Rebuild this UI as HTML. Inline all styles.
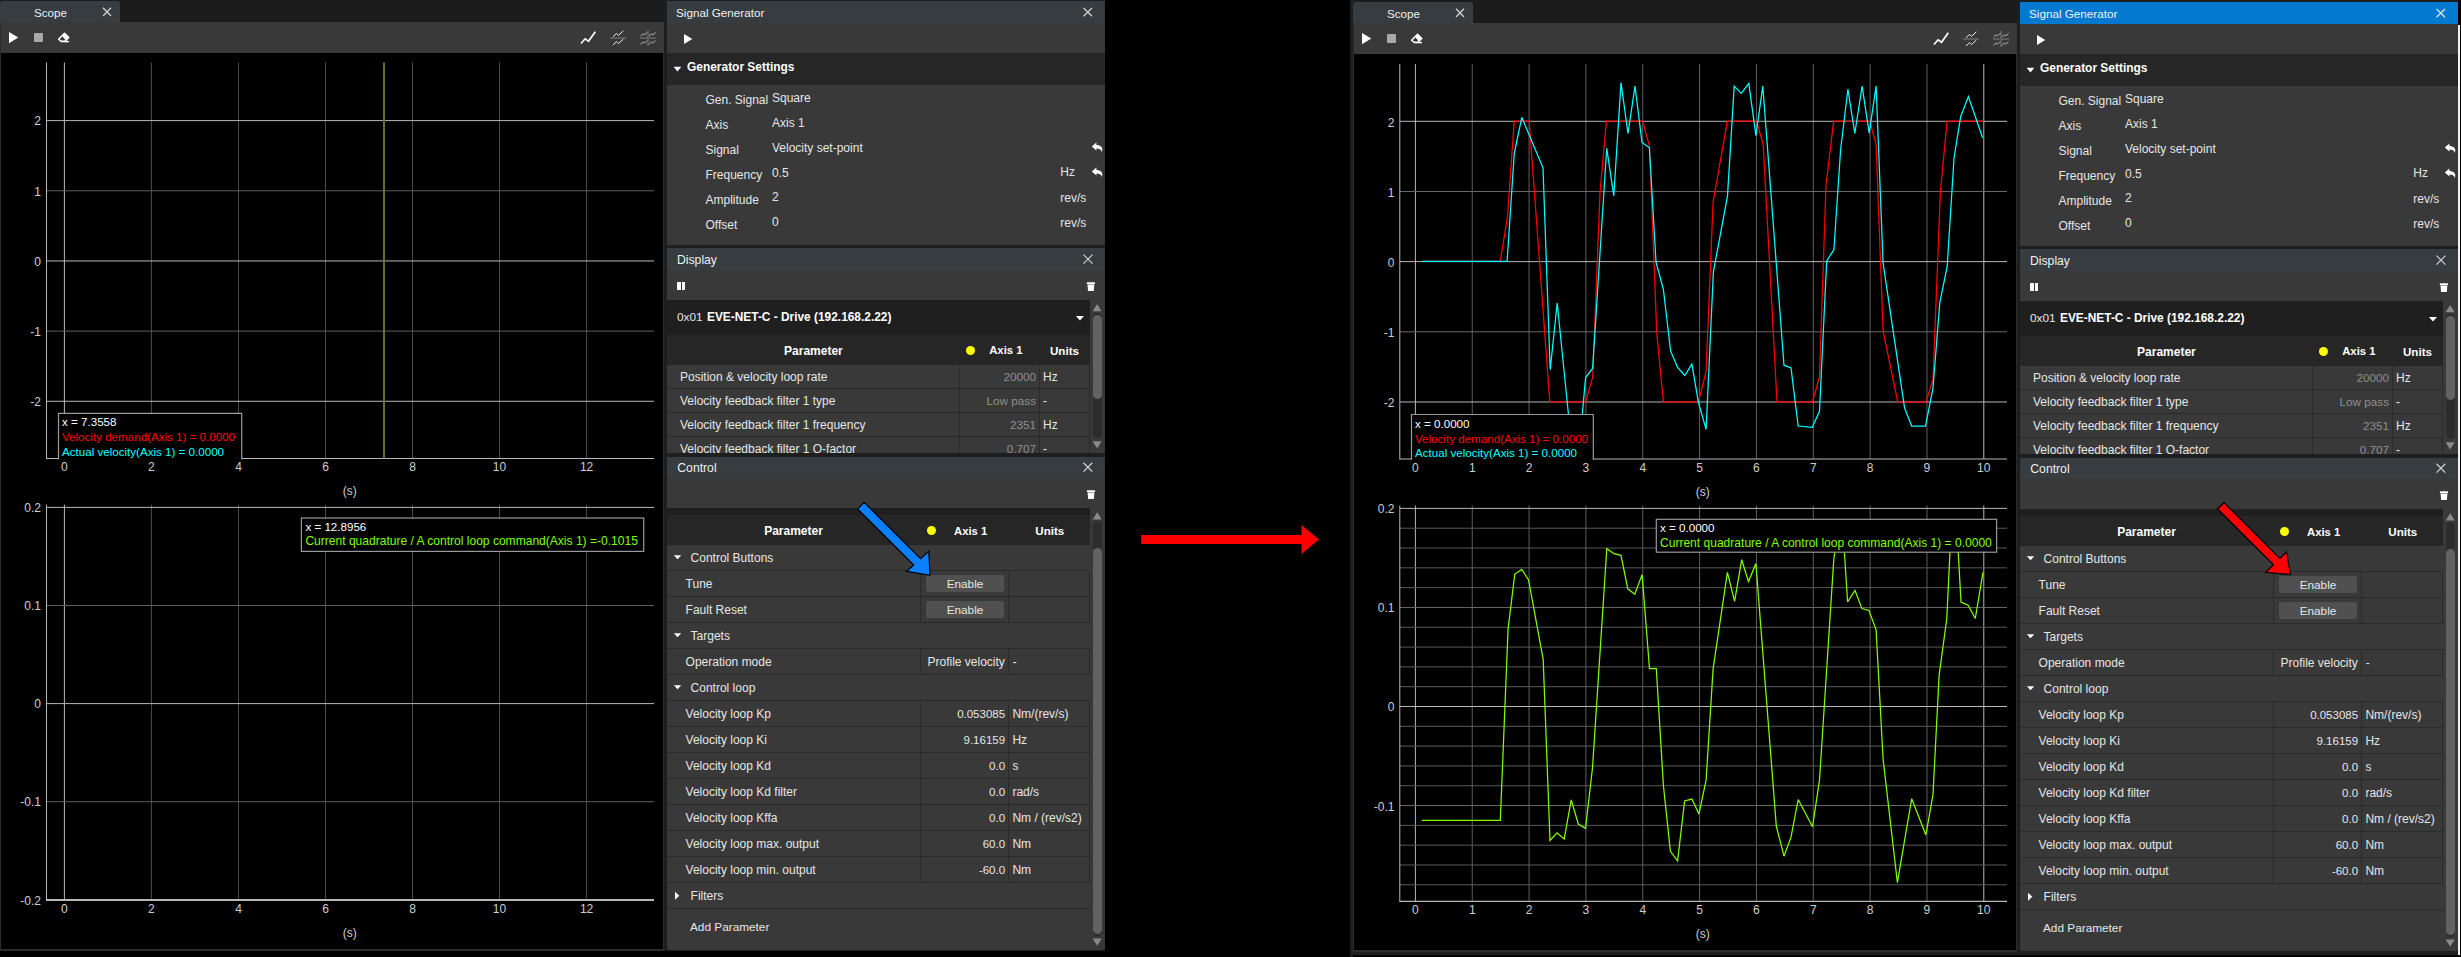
<!DOCTYPE html>
<html><head><meta charset="utf-8"><style>
html,body{margin:0;padding:0;background:#000;width:2461px;height:957px;overflow:hidden}
#root{position:relative;width:2461px;height:957px;font-family:"Liberation Sans", sans-serif;}
#root>div{position:absolute;white-space:nowrap}
svg{position:absolute;left:0;top:0}
</style></head><body><div id="root">
<div style="left:0.00px;top:0.00px;width:1105.00px;height:951.00px;background:#1e1e1e;"></div>
<div style="left:0.00px;top:0.00px;width:664.00px;height:22.00px;background:#1c1c1c;"></div>
<div style="left:0.00px;top:1.00px;width:120.00px;height:21.00px;background:#363c40;border-radius:3px 3px 0 0;"></div>
<div style="left:34.00px;top:7.48px;font-size:11.6px;line-height:11.6px;color:#f0f0f0;">Scope</div>
<svg width="2461" height="957" viewBox="0 0 2461 957" style="position:absolute;left:0;top:0"><path d="M103 7.8L111 16M111 7.8L103 16" stroke="#cfcfcf" stroke-width="1.3" fill="none"/></svg>
<div style="left:0.00px;top:22.00px;width:664.00px;height:929.00px;background:#2c2c2c;"></div>
<div style="left:1.00px;top:22.00px;width:663.00px;height:31.00px;background:#393939;"></div>
<div style="left:1.00px;top:53.00px;width:662.00px;height:896.00px;background:#000000;"></div>
<svg width="2461" height="957" viewBox="0 0 2461 957" style="position:absolute;left:0;top:0"><path d="M9 32L18.3 37.6L9 43.2Z" fill="#ffffff"/></svg>
<div style="left:34.00px;top:32.60px;width:9.00px;height:9.40px;background:#a9a9a9;border-radius:1px;"></div>
<svg width="2461" height="957" viewBox="0 0 2461 957" style="position:absolute;left:0;top:0"><path d="M58.6 39.2L64.5 33.2L68.8 37.5L65 41.3H61Z" fill="none" stroke="#fff" stroke-width="1.5" stroke-linejoin="round"/><path d="M62 35.8L64.5 33.2L68.8 37.5L65.8 40.5Z" fill="#fff"/><path d="M61 41.6H69" stroke="#fff" stroke-width="1.4"/><path d="M581 43.5L585.1 38.8L588.5 41.2L595.3 31.8" fill="none" stroke="#fff" stroke-width="1.7"/></svg>
<div style="left:610.20px;top:37.10px;width:15.60px;height:1.80px;background:#5c5c5c;"></div>
<svg width="2461" height="957" viewBox="0 0 2461 957" style="position:absolute;left:0;top:0"><path d="M613 36.7L616.5 33.5L618.5 35.4L623.3 30.8M613 44.9L616.5 41.7L618.5 43.6L623.3 39.1" fill="none" stroke="#eee" stroke-width="1"/></svg>
<div style="left:640.10px;top:37.20px;width:15.80px;height:1.70px;background:#5c5c5c;"></div>
<div style="left:647.40px;top:30.20px;width:1.50px;height:15.40px;background:#5c5c5c;"></div>
<svg width="2461" height="957" viewBox="0 0 2461 957" style="position:absolute;left:0;top:0"><path d="M640.5 36L643 33.8L644.5 35L647 32.3M649 36L651.5 33.8L653 35L655.5 32.3M640.5 44.3L643 42L644.5 43.2L647 40.5M649 44.3L651.5 42L653 43.2L655.5 40.5" fill="none" stroke="#bdbdbd" stroke-width="0.9"/></svg>
<div style="left:667.00px;top:1.00px;width:438.00px;height:22.00px;background:#363c40;"></div>
<div style="left:676.00px;top:7.40px;font-size:11.7px;line-height:11.7px;color:#f0f0f0;">Signal Generator</div>
<svg width="2461" height="957" viewBox="0 0 2461 957" style="position:absolute;left:0;top:0"><path d="M1083.5 8L1092 16.2M1092 8L1083.5 16.2" stroke="#cfcfcf" stroke-width="1.3" fill="none"/></svg>
<div style="left:667.00px;top:23.00px;width:438.00px;height:30.00px;background:#393939;"></div>
<svg width="2461" height="957" viewBox="0 0 2461 957" style="position:absolute;left:0;top:0"><path d="M684 34L692.3 39.0L684 44Z" fill="#ffffff"/></svg>
<div style="left:667.00px;top:53.00px;width:438.00px;height:32.00px;background:#262626;"></div>
<svg width="2461" height="957" viewBox="0 0 2461 957" style="position:absolute;left:0;top:0"><path d="M673.6 66.8L681.3 66.8L677.45 71.4Z" fill="#ffffff"/></svg>
<div style="left:687.00px;top:62.08px;font-size:11.95px;line-height:11.95px;color:#ffffff;font-weight:bold;">Generator Settings</div>
<div style="left:667.00px;top:85.00px;width:438.00px;height:159.50px;background:#393939;"></div>
<div style="left:705.50px;top:93.84px;font-size:12px;line-height:12px;color:#e6e6e6;">Gen. Signal</div>
<div style="left:772.00px;top:92.04px;font-size:12px;line-height:12px;color:#e6e6e6;">Square</div>
<div style="left:705.50px;top:118.78px;font-size:12px;line-height:12px;color:#e6e6e6;">Axis</div>
<div style="left:772.00px;top:116.90px;font-size:12px;line-height:12px;color:#e6e6e6;">Axis 1</div>
<div style="left:705.50px;top:143.72px;font-size:12px;line-height:12px;color:#e6e6e6;">Signal</div>
<div style="left:772.00px;top:141.76px;font-size:12px;line-height:12px;color:#e6e6e6;">Velocity set-point</div>
<div style="left:705.50px;top:168.66px;font-size:12px;line-height:12px;color:#e6e6e6;">Frequency</div>
<div style="left:772.00px;top:166.62px;font-size:12px;line-height:12px;color:#e6e6e6;">0.5</div>
<div style="left:705.50px;top:193.60px;font-size:12px;line-height:12px;color:#e6e6e6;">Amplitude</div>
<div style="left:772.00px;top:191.48px;font-size:12px;line-height:12px;color:#e6e6e6;">2</div>
<div style="left:705.50px;top:218.54px;font-size:12px;line-height:12px;color:#e6e6e6;">Offset</div>
<div style="left:772.00px;top:216.34px;font-size:12px;line-height:12px;color:#e6e6e6;">0</div>
<div style="left:1060.30px;top:166.34px;font-size:12px;line-height:12px;color:#e6e6e6;">Hz</div>
<div style="left:1060.30px;top:192.24px;font-size:12px;line-height:12px;color:#e6e6e6;">rev/s</div>
<div style="left:1060.30px;top:217.24px;font-size:12px;line-height:12px;color:#e6e6e6;">rev/s</div>
<svg width="2461" height="957" viewBox="0 0 2461 957" style="position:absolute;left:0;top:0"><path d="M1091.8 146.6L1096.3999999999999 142.6V144.9C1100.3 144.9 1103.6 147.2 1101.8 151.9C1101.1 149.6 1099.3 148.6 1096.3999999999999 148.6V150.6Z" fill="#ffffff"/><path d="M1091.8 171.6L1096.3999999999999 167.6V169.9C1100.3 169.9 1103.6 172.2 1101.8 176.9C1101.1 174.6 1099.3 173.6 1096.3999999999999 173.6V175.6Z" fill="#ffffff"/></svg>
<div style="left:667.00px;top:248.00px;width:438.00px;height:22.00px;background:#363c40;"></div>
<div style="left:677.00px;top:253.87px;font-size:12.2px;line-height:12.2px;color:#f0f0f0;">Display</div>
<svg width="2461" height="957" viewBox="0 0 2461 957" style="position:absolute;left:0;top:0"><path d="M1083.5 254.6L1092.5 263.6M1092.5 254.6L1083.5 263.6" stroke="#cfcfcf" stroke-width="1.3" fill="none"/></svg>
<div style="left:667.00px;top:270.00px;width:438.00px;height:182.60px;background:#393939;"></div>
<div style="left:677.20px;top:281.80px;width:3.40px;height:8.20px;background:#ffffff;"></div>
<div style="left:681.80px;top:281.80px;width:3.40px;height:8.20px;background:#ffffff;"></div>
<svg width="2461" height="957" viewBox="0 0 2461 957" style="position:absolute;left:0;top:0"><path d="M1086.8 282.3h8.2v1.8h-8.2Z" fill="#ffffff"/><path d="M1089.6 282.3q1.2-1.3 2.4 0Z" fill="#ffffff"/><path d="M1087.5 284.5h6.8l-0.5 6.5h-5.8Z" fill="#ffffff"/></svg>
<div style="left:667.00px;top:300.00px;width:423.00px;height:34.70px;background:#1f1f1f;"></div>
<div style="left:677.00px;top:312.31px;font-size:11.8px;line-height:11.8px;color:#e6e6e6;">0x01</div>
<div style="left:707.00px;top:312.23px;font-size:11.9px;line-height:11.9px;color:#ffffff;font-weight:bold;">EVE-NET-C - Drive (192.168.2.22)</div>
<svg width="2461" height="957" viewBox="0 0 2461 957" style="position:absolute;left:0;top:0"><path d="M1075.9 316L1084 316L1079.95 320.6Z" fill="#ffffff"/></svg>
<div style="left:667.00px;top:334.70px;width:423.00px;height:30.30px;background:#262626;"></div>
<div style="left:513.40px;width:600px;text-align:center;top:344.54px;font-size:12px;line-height:12px;color:#ffffff;font-weight:bold;">Parameter</div>
<div style="left:966.30px;top:345.80px;width:9px;height:9px;border-radius:50%;background:#ffff00"></div>
<div style="left:989.20px;top:345.33px;font-size:11.3px;line-height:11.3px;color:#ffffff;font-weight:bold;">Axis 1</div>
<div style="left:1050.00px;top:345.08px;font-size:11.6px;line-height:11.6px;color:#ffffff;font-weight:bold;">Units</div>
<div style="left:680.00px;top:370.94px;font-size:12px;line-height:12px;color:#e6e6e6;">Position &amp; velocity loop rate</div>
<div style="left:436.00px;width:600px;text-align:right;top:371.20px;font-size:11.7px;line-height:11.7px;color:#8f8f8f;">20000</div>
<div style="left:1043.00px;top:370.94px;font-size:12px;line-height:12px;color:#e6e6e6;">Hz</div>
<div style="left:680.00px;top:395.14px;font-size:12px;line-height:12px;color:#e6e6e6;">Velocity feedback filter 1 type</div>
<div style="left:436.00px;width:600px;text-align:right;top:395.40px;font-size:11.7px;line-height:11.7px;color:#8f8f8f;">Low pass</div>
<div style="left:1043.00px;top:395.14px;font-size:12px;line-height:12px;color:#e6e6e6;">-</div>
<div style="left:680.00px;top:419.04px;font-size:12px;line-height:12px;color:#e6e6e6;">Velocity feedback filter 1 frequency</div>
<div style="left:436.00px;width:600px;text-align:right;top:419.30px;font-size:11.7px;line-height:11.7px;color:#8f8f8f;">2351</div>
<div style="left:1043.00px;top:419.04px;font-size:12px;line-height:12px;color:#e6e6e6;">Hz</div>
<div style="left:680.00px;top:442.94px;font-size:12px;line-height:12px;color:#e6e6e6;">Velocity feedback filter 1 Q-factor</div>
<div style="left:436.00px;width:600px;text-align:right;top:443.20px;font-size:11.7px;line-height:11.7px;color:#8f8f8f;">0.707</div>
<div style="left:1043.00px;top:442.94px;font-size:12px;line-height:12px;color:#e6e6e6;">-</div>
<div style="left:667.00px;top:387.80px;width:423.00px;height:1.00px;background:#2b2b2b;"></div>
<div style="left:667.00px;top:411.90px;width:423.00px;height:1.00px;background:#2b2b2b;"></div>
<div style="left:667.00px;top:436.10px;width:423.00px;height:1.00px;background:#2b2b2b;"></div>
<div style="left:958.80px;top:365.00px;width:1.00px;height:87.60px;background:#2b2b2b;"></div>
<div style="left:1038.80px;top:365.00px;width:1.00px;height:87.60px;background:#2b2b2b;"></div>
<div style="left:1089.20px;top:365.00px;width:1.00px;height:87.60px;background:#2b2b2b;"></div>
<div style="left:667.00px;top:452.60px;width:438.00px;height:3.90px;background:#1e1e1e;"></div>
<svg width="2461" height="957" viewBox="0 0 2461 957" style="position:absolute;left:0;top:0"><path d="M1092.6 311.3L1101.6 311.3L1097.1 304Z" fill="#8a8a8a"/></svg>
<div style="left:1093.10px;top:312.50px;width:9.00px;height:125.50px;background:#2c2c2c;border-radius:4.5px;"></div>
<div style="left:1093.10px;top:314.70px;width:9.00px;height:83.90px;background:#626262;border-radius:4.5px;"></div>
<svg width="2461" height="957" viewBox="0 0 2461 957" style="position:absolute;left:0;top:0"><path d="M1092.6 441.2L1101.6 441.2L1097.1 448.5Z" fill="#8a8a8a"/></svg>
<div style="left:667.00px;top:456.50px;width:438.00px;height:20.90px;background:#363c40;"></div>
<div style="left:677.30px;top:461.87px;font-size:12.2px;line-height:12.2px;color:#f0f0f0;">Control</div>
<svg width="2461" height="957" viewBox="0 0 2461 957" style="position:absolute;left:0;top:0"><path d="M1083.5 462.7L1092.3 471.6M1092.3 462.7L1083.5 471.6" stroke="#cfcfcf" stroke-width="1.3" fill="none"/></svg>
<div style="left:667.00px;top:477.40px;width:438.00px;height:472.40px;background:#393939;border-radius:0 0 2px 2px;"></div>
<svg width="2461" height="957" viewBox="0 0 2461 957" style="position:absolute;left:0;top:0"><path d="M1086.9 490.3h8.2v1.8h-8.2Z" fill="#ffffff"/><path d="M1089.7 490.3q1.2-1.3 2.4 0Z" fill="#ffffff"/><path d="M1087.6000000000001 492.5h6.8l-0.5 6.5h-5.8Z" fill="#ffffff"/></svg>
<div style="left:667.00px;top:507.50px;width:423.00px;height:7.30px;background:#1f1f1f;"></div>
<div style="left:667.00px;top:514.80px;width:423.00px;height:30.40px;background:#262626;"></div>
<div style="left:493.50px;width:600px;text-align:center;top:524.84px;font-size:12px;line-height:12px;color:#ffffff;font-weight:bold;">Parameter</div>
<div style="left:927.30px;top:525.60px;width:9.2px;height:9.2px;border-radius:50%;background:#ffff00"></div>
<div style="left:954.00px;top:525.53px;font-size:11.3px;line-height:11.3px;color:#ffffff;font-weight:bold;">Axis 1</div>
<div style="left:1035.30px;top:525.28px;font-size:11.6px;line-height:11.6px;color:#ffffff;font-weight:bold;">Units</div>
<svg width="2461" height="957" viewBox="0 0 2461 957" style="position:absolute;left:0;top:0"><path d="M673.9 555.2L681.2 555.2L677.55 559.3Z" fill="#ffffff"/></svg>
<div style="left:690.60px;top:552.44px;font-size:12px;line-height:12px;color:#e6e6e6;">Control Buttons</div>
<div style="left:667.00px;top:570.00px;width:423.00px;height:1.00px;background:#2b2b2b;"></div>
<div style="left:685.60px;top:578.44px;font-size:12px;line-height:12px;color:#e6e6e6;">Tune</div>
<div style="left:919.90px;top:570.50px;width:1.00px;height:26.00px;background:#2b2b2b;"></div>
<div style="left:1007.90px;top:570.50px;width:1.00px;height:26.00px;background:#2b2b2b;"></div>
<div style="left:1089.20px;top:570.50px;width:1.00px;height:26.00px;background:#2b2b2b;"></div>
<div style="left:926.20px;top:574.80px;width:77.80px;height:17.00px;background:#505050;border-radius:2px;"></div>
<div style="left:665.00px;width:600px;text-align:center;top:578.61px;font-size:11.8px;line-height:11.8px;color:#e6e6e6;">Enable</div>
<div style="left:667.00px;top:596.00px;width:423.00px;height:1.00px;background:#2b2b2b;"></div>
<div style="left:685.60px;top:604.44px;font-size:12px;line-height:12px;color:#e6e6e6;">Fault Reset</div>
<div style="left:919.90px;top:596.50px;width:1.00px;height:26.00px;background:#2b2b2b;"></div>
<div style="left:1007.90px;top:596.50px;width:1.00px;height:26.00px;background:#2b2b2b;"></div>
<div style="left:1089.20px;top:596.50px;width:1.00px;height:26.00px;background:#2b2b2b;"></div>
<div style="left:926.20px;top:600.80px;width:77.80px;height:17.00px;background:#505050;border-radius:2px;"></div>
<div style="left:665.00px;width:600px;text-align:center;top:604.61px;font-size:11.8px;line-height:11.8px;color:#e6e6e6;">Enable</div>
<div style="left:667.00px;top:622.00px;width:423.00px;height:1.00px;background:#2b2b2b;"></div>
<svg width="2461" height="957" viewBox="0 0 2461 957" style="position:absolute;left:0;top:0"><path d="M673.9 633.2L681.2 633.2L677.55 637.3Z" fill="#ffffff"/></svg>
<div style="left:690.60px;top:630.44px;font-size:12px;line-height:12px;color:#e6e6e6;">Targets</div>
<div style="left:667.00px;top:648.00px;width:423.00px;height:1.00px;background:#2b2b2b;"></div>
<div style="left:685.60px;top:656.44px;font-size:12px;line-height:12px;color:#e6e6e6;">Operation mode</div>
<div style="left:919.90px;top:648.50px;width:1.00px;height:26.00px;background:#2b2b2b;"></div>
<div style="left:1007.90px;top:648.50px;width:1.00px;height:26.00px;background:#2b2b2b;"></div>
<div style="left:1089.20px;top:648.50px;width:1.00px;height:26.00px;background:#2b2b2b;"></div>
<div style="left:927.50px;top:656.44px;font-size:12px;line-height:12px;color:#e6e6e6;">Profile velocity</div>
<div style="left:1012.80px;top:656.44px;font-size:12px;line-height:12px;color:#e6e6e6;">-</div>
<div style="left:667.00px;top:674.00px;width:423.00px;height:1.00px;background:#2b2b2b;"></div>
<svg width="2461" height="957" viewBox="0 0 2461 957" style="position:absolute;left:0;top:0"><path d="M673.9 685.2L681.2 685.2L677.55 689.3Z" fill="#ffffff"/></svg>
<div style="left:690.60px;top:682.44px;font-size:12px;line-height:12px;color:#e6e6e6;">Control loop</div>
<div style="left:667.00px;top:700.00px;width:423.00px;height:1.00px;background:#2b2b2b;"></div>
<div style="left:685.60px;top:708.44px;font-size:12px;line-height:12px;color:#e6e6e6;">Velocity loop Kp</div>
<div style="left:919.90px;top:700.50px;width:1.00px;height:26.00px;background:#2b2b2b;"></div>
<div style="left:1007.90px;top:700.50px;width:1.00px;height:26.00px;background:#2b2b2b;"></div>
<div style="left:1089.20px;top:700.50px;width:1.00px;height:26.00px;background:#2b2b2b;"></div>
<div style="left:405.10px;width:600px;text-align:right;top:708.87px;font-size:11.5px;line-height:11.5px;color:#e6e6e6;">0.053085</div>
<div style="left:1012.40px;top:708.44px;font-size:12px;line-height:12px;color:#e6e6e6;">Nm/(rev/s)</div>
<div style="left:667.00px;top:726.00px;width:423.00px;height:1.00px;background:#2b2b2b;"></div>
<div style="left:685.60px;top:734.44px;font-size:12px;line-height:12px;color:#e6e6e6;">Velocity loop Ki</div>
<div style="left:919.90px;top:726.50px;width:1.00px;height:26.00px;background:#2b2b2b;"></div>
<div style="left:1007.90px;top:726.50px;width:1.00px;height:26.00px;background:#2b2b2b;"></div>
<div style="left:1089.20px;top:726.50px;width:1.00px;height:26.00px;background:#2b2b2b;"></div>
<div style="left:405.10px;width:600px;text-align:right;top:734.87px;font-size:11.5px;line-height:11.5px;color:#e6e6e6;">9.16159</div>
<div style="left:1012.40px;top:734.44px;font-size:12px;line-height:12px;color:#e6e6e6;">Hz</div>
<div style="left:667.00px;top:752.00px;width:423.00px;height:1.00px;background:#2b2b2b;"></div>
<div style="left:685.60px;top:760.44px;font-size:12px;line-height:12px;color:#e6e6e6;">Velocity loop Kd</div>
<div style="left:919.90px;top:752.50px;width:1.00px;height:26.00px;background:#2b2b2b;"></div>
<div style="left:1007.90px;top:752.50px;width:1.00px;height:26.00px;background:#2b2b2b;"></div>
<div style="left:1089.20px;top:752.50px;width:1.00px;height:26.00px;background:#2b2b2b;"></div>
<div style="left:405.10px;width:600px;text-align:right;top:760.87px;font-size:11.5px;line-height:11.5px;color:#e6e6e6;">0.0</div>
<div style="left:1012.40px;top:760.44px;font-size:12px;line-height:12px;color:#e6e6e6;">s</div>
<div style="left:667.00px;top:778.00px;width:423.00px;height:1.00px;background:#2b2b2b;"></div>
<div style="left:685.60px;top:786.44px;font-size:12px;line-height:12px;color:#e6e6e6;">Velocity loop Kd filter</div>
<div style="left:919.90px;top:778.50px;width:1.00px;height:26.00px;background:#2b2b2b;"></div>
<div style="left:1007.90px;top:778.50px;width:1.00px;height:26.00px;background:#2b2b2b;"></div>
<div style="left:1089.20px;top:778.50px;width:1.00px;height:26.00px;background:#2b2b2b;"></div>
<div style="left:405.10px;width:600px;text-align:right;top:786.87px;font-size:11.5px;line-height:11.5px;color:#e6e6e6;">0.0</div>
<div style="left:1012.40px;top:786.44px;font-size:12px;line-height:12px;color:#e6e6e6;">rad/s</div>
<div style="left:667.00px;top:804.00px;width:423.00px;height:1.00px;background:#2b2b2b;"></div>
<div style="left:685.60px;top:812.44px;font-size:12px;line-height:12px;color:#e6e6e6;">Velocity loop Kffa</div>
<div style="left:919.90px;top:804.50px;width:1.00px;height:26.00px;background:#2b2b2b;"></div>
<div style="left:1007.90px;top:804.50px;width:1.00px;height:26.00px;background:#2b2b2b;"></div>
<div style="left:1089.20px;top:804.50px;width:1.00px;height:26.00px;background:#2b2b2b;"></div>
<div style="left:405.10px;width:600px;text-align:right;top:812.87px;font-size:11.5px;line-height:11.5px;color:#e6e6e6;">0.0</div>
<div style="left:1012.40px;top:812.44px;font-size:12px;line-height:12px;color:#e6e6e6;">Nm / (rev/s2)</div>
<div style="left:667.00px;top:830.00px;width:423.00px;height:1.00px;background:#2b2b2b;"></div>
<div style="left:685.60px;top:838.44px;font-size:12px;line-height:12px;color:#e6e6e6;">Velocity loop max. output</div>
<div style="left:919.90px;top:830.50px;width:1.00px;height:26.00px;background:#2b2b2b;"></div>
<div style="left:1007.90px;top:830.50px;width:1.00px;height:26.00px;background:#2b2b2b;"></div>
<div style="left:1089.20px;top:830.50px;width:1.00px;height:26.00px;background:#2b2b2b;"></div>
<div style="left:405.10px;width:600px;text-align:right;top:838.87px;font-size:11.5px;line-height:11.5px;color:#e6e6e6;">60.0</div>
<div style="left:1012.40px;top:838.44px;font-size:12px;line-height:12px;color:#e6e6e6;">Nm</div>
<div style="left:667.00px;top:856.00px;width:423.00px;height:1.00px;background:#2b2b2b;"></div>
<div style="left:685.60px;top:864.44px;font-size:12px;line-height:12px;color:#e6e6e6;">Velocity loop min. output</div>
<div style="left:919.90px;top:856.50px;width:1.00px;height:26.00px;background:#2b2b2b;"></div>
<div style="left:1007.90px;top:856.50px;width:1.00px;height:26.00px;background:#2b2b2b;"></div>
<div style="left:1089.20px;top:856.50px;width:1.00px;height:26.00px;background:#2b2b2b;"></div>
<div style="left:405.10px;width:600px;text-align:right;top:864.87px;font-size:11.5px;line-height:11.5px;color:#e6e6e6;">-60.0</div>
<div style="left:1012.40px;top:864.44px;font-size:12px;line-height:12px;color:#e6e6e6;">Nm</div>
<div style="left:667.00px;top:882.00px;width:423.00px;height:1.00px;background:#2b2b2b;"></div>
<svg width="2461" height="957" viewBox="0 0 2461 957" style="position:absolute;left:0;top:0"><path d="M675 891.8L679.3 895.8L675 899.8Z" fill="#ffffff"/></svg>
<div style="left:690.60px;top:890.44px;font-size:12px;line-height:12px;color:#e6e6e6;">Filters</div>
<div style="left:667.00px;top:908.00px;width:423.00px;height:1.00px;background:#2b2b2b;"></div>
<div style="left:690.00px;top:921.61px;font-size:11.8px;line-height:11.8px;color:#e6e6e6;">Add Parameter</div>
<svg width="2461" height="957" viewBox="0 0 2461 957" style="position:absolute;left:0;top:0"><path d="M1092.7 519.5999999999999L1101.7 519.5999999999999L1097.2 512.3Z" fill="#8a8a8a"/></svg>
<div style="left:1093.20px;top:520.80px;width:9.00px;height:415.20px;background:#2c2c2c;border-radius:4.5px;"></div>
<div style="left:1093.20px;top:548.00px;width:9.00px;height:386.00px;background:#626262;border-radius:4.5px;"></div>
<svg width="2461" height="957" viewBox="0 0 2461 957" style="position:absolute;left:0;top:0"><path d="M1092.7 938.5L1101.7 938.5L1097.2 945.8Z" fill="#8a8a8a"/></svg>
<div style="left:1350.00px;top:0.00px;width:3.00px;height:957.00px;background:#1e1e1e;"></div>
<div style="left:1353.00px;top:0.00px;width:1105.00px;height:954.50px;background:#1e1e1e;"></div>
<div style="left:1353.00px;top:0.00px;width:664.00px;height:23.00px;background:#1c1c1c;"></div>
<div style="left:1353.00px;top:2.00px;width:120.00px;height:21.00px;background:#363c40;border-radius:3px 3px 0 0;"></div>
<div style="left:1387.00px;top:8.48px;font-size:11.6px;line-height:11.6px;color:#f0f0f0;">Scope</div>
<svg width="2461" height="957" viewBox="0 0 2461 957" style="position:absolute;left:0;top:0"><path d="M1456 8.8L1464 17M1464 8.8L1456 17" stroke="#cfcfcf" stroke-width="1.3" fill="none"/></svg>
<div style="left:1353.00px;top:23.00px;width:664.00px;height:929.00px;background:#2c2c2c;"></div>
<div style="left:1354.00px;top:23.00px;width:663.00px;height:31.00px;background:#393939;"></div>
<div style="left:1354.00px;top:54.00px;width:662.00px;height:896.00px;background:#000000;"></div>
<svg width="2461" height="957" viewBox="0 0 2461 957" style="position:absolute;left:0;top:0"><path d="M1362 33L1371.3 38.6L1362 44.2Z" fill="#ffffff"/></svg>
<div style="left:1387.00px;top:33.60px;width:9.00px;height:9.40px;background:#a9a9a9;border-radius:1px;"></div>
<svg width="2461" height="957" viewBox="0 0 2461 957" style="position:absolute;left:0;top:0"><path d="M1411.6 40.2L1417.5 34.2L1421.8 38.5L1418 42.3H1414Z" fill="none" stroke="#fff" stroke-width="1.5" stroke-linejoin="round"/><path d="M1415 36.8L1417.5 34.2L1421.8 38.5L1418.8 41.5Z" fill="#fff"/><path d="M1414 42.6H1422" stroke="#fff" stroke-width="1.4"/><path d="M1934 44.5L1938.1 39.8L1941.5 42.2L1948.3 32.8" fill="none" stroke="#fff" stroke-width="1.7"/></svg>
<div style="left:1963.20px;top:38.10px;width:15.60px;height:1.80px;background:#5c5c5c;"></div>
<svg width="2461" height="957" viewBox="0 0 2461 957" style="position:absolute;left:0;top:0"><path d="M1966 37.7L1969.5 34.5L1971.5 36.4L1976.3 31.8M1966 45.9L1969.5 42.7L1971.5 44.6L1976.3 40.1" fill="none" stroke="#eee" stroke-width="1"/></svg>
<div style="left:1993.10px;top:38.20px;width:15.80px;height:1.70px;background:#5c5c5c;"></div>
<div style="left:2000.40px;top:31.20px;width:1.50px;height:15.40px;background:#5c5c5c;"></div>
<svg width="2461" height="957" viewBox="0 0 2461 957" style="position:absolute;left:0;top:0"><path d="M1993.5 37L1996 34.8L1997.5 36L2000 33.3M2002 37L2004.5 34.8L2006 36L2008.5 33.3M1993.5 45.3L1996 43L1997.5 44.2L2000 41.5M2002 45.3L2004.5 43L2006 44.2L2008.5 41.5" fill="none" stroke="#bdbdbd" stroke-width="0.9"/></svg>
<div style="left:2020.00px;top:2.00px;width:438.00px;height:22.00px;background:#0079cf;"></div>
<div style="left:2029.00px;top:8.40px;font-size:11.7px;line-height:11.7px;color:#f0f0f0;">Signal Generator</div>
<svg width="2461" height="957" viewBox="0 0 2461 957" style="position:absolute;left:0;top:0"><path d="M2436.5 9L2445 17.2M2445 9L2436.5 17.2" stroke="#e0e0e0" stroke-width="1.3" fill="none"/></svg>
<div style="left:2020.00px;top:24.00px;width:438.00px;height:30.00px;background:#393939;"></div>
<svg width="2461" height="957" viewBox="0 0 2461 957" style="position:absolute;left:0;top:0"><path d="M2037 35L2045.3 40.0L2037 45Z" fill="#ffffff"/></svg>
<div style="left:2020.00px;top:54.00px;width:438.00px;height:32.00px;background:#262626;"></div>
<svg width="2461" height="957" viewBox="0 0 2461 957" style="position:absolute;left:0;top:0"><path d="M2026.6 67.8L2034.3 67.8L2030.4499999999998 72.4Z" fill="#ffffff"/></svg>
<div style="left:2040.00px;top:63.08px;font-size:11.95px;line-height:11.95px;color:#ffffff;font-weight:bold;">Generator Settings</div>
<div style="left:2020.00px;top:86.00px;width:438.00px;height:159.50px;background:#393939;"></div>
<div style="left:2058.50px;top:94.84px;font-size:12px;line-height:12px;color:#e6e6e6;">Gen. Signal</div>
<div style="left:2125.00px;top:93.04px;font-size:12px;line-height:12px;color:#e6e6e6;">Square</div>
<div style="left:2058.50px;top:119.78px;font-size:12px;line-height:12px;color:#e6e6e6;">Axis</div>
<div style="left:2125.00px;top:117.90px;font-size:12px;line-height:12px;color:#e6e6e6;">Axis 1</div>
<div style="left:2058.50px;top:144.72px;font-size:12px;line-height:12px;color:#e6e6e6;">Signal</div>
<div style="left:2125.00px;top:142.76px;font-size:12px;line-height:12px;color:#e6e6e6;">Velocity set-point</div>
<div style="left:2058.50px;top:169.66px;font-size:12px;line-height:12px;color:#e6e6e6;">Frequency</div>
<div style="left:2125.00px;top:167.62px;font-size:12px;line-height:12px;color:#e6e6e6;">0.5</div>
<div style="left:2058.50px;top:194.60px;font-size:12px;line-height:12px;color:#e6e6e6;">Amplitude</div>
<div style="left:2125.00px;top:192.48px;font-size:12px;line-height:12px;color:#e6e6e6;">2</div>
<div style="left:2058.50px;top:219.54px;font-size:12px;line-height:12px;color:#e6e6e6;">Offset</div>
<div style="left:2125.00px;top:217.34px;font-size:12px;line-height:12px;color:#e6e6e6;">0</div>
<div style="left:2413.30px;top:167.34px;font-size:12px;line-height:12px;color:#e6e6e6;">Hz</div>
<div style="left:2413.30px;top:193.24px;font-size:12px;line-height:12px;color:#e6e6e6;">rev/s</div>
<div style="left:2413.30px;top:218.24px;font-size:12px;line-height:12px;color:#e6e6e6;">rev/s</div>
<svg width="2461" height="957" viewBox="0 0 2461 957" style="position:absolute;left:0;top:0"><path d="M2444.8 147.6L2449.4 143.6V145.9C2453.3 145.9 2456.6000000000004 148.2 2454.8 152.9C2454.1000000000004 150.6 2452.3 149.6 2449.4 149.6V151.6Z" fill="#ffffff"/><path d="M2444.8 172.6L2449.4 168.6V170.9C2453.3 170.9 2456.6000000000004 173.2 2454.8 177.9C2454.1000000000004 175.6 2452.3 174.6 2449.4 174.6V176.6Z" fill="#ffffff"/></svg>
<div style="left:2020.00px;top:249.00px;width:438.00px;height:22.00px;background:#363c40;"></div>
<div style="left:2030.00px;top:254.87px;font-size:12.2px;line-height:12.2px;color:#f0f0f0;">Display</div>
<svg width="2461" height="957" viewBox="0 0 2461 957" style="position:absolute;left:0;top:0"><path d="M2436.5 255.6L2445.5 264.6M2445.5 255.6L2436.5 264.6" stroke="#cfcfcf" stroke-width="1.3" fill="none"/></svg>
<div style="left:2020.00px;top:271.00px;width:438.00px;height:182.60px;background:#393939;"></div>
<div style="left:2030.20px;top:282.80px;width:3.40px;height:8.20px;background:#ffffff;"></div>
<div style="left:2034.80px;top:282.80px;width:3.40px;height:8.20px;background:#ffffff;"></div>
<svg width="2461" height="957" viewBox="0 0 2461 957" style="position:absolute;left:0;top:0"><path d="M2439.7999999999997 283.3h8.2v1.8h-8.2Z" fill="#ffffff"/><path d="M2442.6 283.3q1.2-1.3 2.4 0Z" fill="#ffffff"/><path d="M2440.5 285.5h6.8l-0.5 6.5h-5.8Z" fill="#ffffff"/></svg>
<div style="left:2020.00px;top:301.00px;width:423.00px;height:34.70px;background:#1f1f1f;"></div>
<div style="left:2030.00px;top:313.31px;font-size:11.8px;line-height:11.8px;color:#e6e6e6;">0x01</div>
<div style="left:2060.00px;top:313.23px;font-size:11.9px;line-height:11.9px;color:#ffffff;font-weight:bold;">EVE-NET-C - Drive (192.168.2.22)</div>
<svg width="2461" height="957" viewBox="0 0 2461 957" style="position:absolute;left:0;top:0"><path d="M2428.9 317L2437 317L2432.95 321.6Z" fill="#ffffff"/></svg>
<div style="left:2020.00px;top:335.70px;width:423.00px;height:30.30px;background:#262626;"></div>
<div style="left:1866.40px;width:600px;text-align:center;top:345.54px;font-size:12px;line-height:12px;color:#ffffff;font-weight:bold;">Parameter</div>
<div style="left:2319.30px;top:346.80px;width:9px;height:9px;border-radius:50%;background:#ffff00"></div>
<div style="left:2342.20px;top:346.33px;font-size:11.3px;line-height:11.3px;color:#ffffff;font-weight:bold;">Axis 1</div>
<div style="left:2403.00px;top:346.08px;font-size:11.6px;line-height:11.6px;color:#ffffff;font-weight:bold;">Units</div>
<div style="left:2033.00px;top:371.94px;font-size:12px;line-height:12px;color:#e6e6e6;">Position &amp; velocity loop rate</div>
<div style="left:1789.00px;width:600px;text-align:right;top:372.20px;font-size:11.7px;line-height:11.7px;color:#8f8f8f;">20000</div>
<div style="left:2396.00px;top:371.94px;font-size:12px;line-height:12px;color:#e6e6e6;">Hz</div>
<div style="left:2033.00px;top:396.14px;font-size:12px;line-height:12px;color:#e6e6e6;">Velocity feedback filter 1 type</div>
<div style="left:1789.00px;width:600px;text-align:right;top:396.40px;font-size:11.7px;line-height:11.7px;color:#8f8f8f;">Low pass</div>
<div style="left:2396.00px;top:396.14px;font-size:12px;line-height:12px;color:#e6e6e6;">-</div>
<div style="left:2033.00px;top:420.04px;font-size:12px;line-height:12px;color:#e6e6e6;">Velocity feedback filter 1 frequency</div>
<div style="left:1789.00px;width:600px;text-align:right;top:420.30px;font-size:11.7px;line-height:11.7px;color:#8f8f8f;">2351</div>
<div style="left:2396.00px;top:420.04px;font-size:12px;line-height:12px;color:#e6e6e6;">Hz</div>
<div style="left:2033.00px;top:443.94px;font-size:12px;line-height:12px;color:#e6e6e6;">Velocity feedback filter 1 Q-factor</div>
<div style="left:1789.00px;width:600px;text-align:right;top:444.20px;font-size:11.7px;line-height:11.7px;color:#8f8f8f;">0.707</div>
<div style="left:2396.00px;top:443.94px;font-size:12px;line-height:12px;color:#e6e6e6;">-</div>
<div style="left:2020.00px;top:388.80px;width:423.00px;height:1.00px;background:#2b2b2b;"></div>
<div style="left:2020.00px;top:412.90px;width:423.00px;height:1.00px;background:#2b2b2b;"></div>
<div style="left:2020.00px;top:437.10px;width:423.00px;height:1.00px;background:#2b2b2b;"></div>
<div style="left:2311.80px;top:366.00px;width:1.00px;height:87.60px;background:#2b2b2b;"></div>
<div style="left:2391.80px;top:366.00px;width:1.00px;height:87.60px;background:#2b2b2b;"></div>
<div style="left:2442.20px;top:366.00px;width:1.00px;height:87.60px;background:#2b2b2b;"></div>
<div style="left:2020.00px;top:453.60px;width:438.00px;height:3.90px;background:#1e1e1e;"></div>
<svg width="2461" height="957" viewBox="0 0 2461 957" style="position:absolute;left:0;top:0"><path d="M2445.6 312.3L2454.6 312.3L2450.1 305Z" fill="#8a8a8a"/></svg>
<div style="left:2446.10px;top:313.50px;width:9.00px;height:125.50px;background:#2c2c2c;border-radius:4.5px;"></div>
<div style="left:2446.10px;top:315.70px;width:9.00px;height:83.90px;background:#626262;border-radius:4.5px;"></div>
<svg width="2461" height="957" viewBox="0 0 2461 957" style="position:absolute;left:0;top:0"><path d="M2445.6 442.2L2454.6 442.2L2450.1 449.5Z" fill="#8a8a8a"/></svg>
<div style="left:2020.00px;top:457.50px;width:438.00px;height:20.90px;background:#363c40;"></div>
<div style="left:2030.30px;top:462.87px;font-size:12.2px;line-height:12.2px;color:#f0f0f0;">Control</div>
<svg width="2461" height="957" viewBox="0 0 2461 957" style="position:absolute;left:0;top:0"><path d="M2436.5 463.7L2445.3 472.6M2445.3 463.7L2436.5 472.6" stroke="#cfcfcf" stroke-width="1.3" fill="none"/></svg>
<div style="left:2020.00px;top:478.40px;width:438.00px;height:472.40px;background:#393939;border-radius:0 0 2px 2px;"></div>
<svg width="2461" height="957" viewBox="0 0 2461 957" style="position:absolute;left:0;top:0"><path d="M2439.8999999999996 491.3h8.2v1.8h-8.2Z" fill="#ffffff"/><path d="M2442.7 491.3q1.2-1.3 2.4 0Z" fill="#ffffff"/><path d="M2440.6 493.5h6.8l-0.5 6.5h-5.8Z" fill="#ffffff"/></svg>
<div style="left:2020.00px;top:508.50px;width:423.00px;height:7.30px;background:#1f1f1f;"></div>
<div style="left:2020.00px;top:515.80px;width:423.00px;height:30.40px;background:#262626;"></div>
<div style="left:1846.50px;width:600px;text-align:center;top:525.84px;font-size:12px;line-height:12px;color:#ffffff;font-weight:bold;">Parameter</div>
<div style="left:2280.30px;top:526.60px;width:9.2px;height:9.2px;border-radius:50%;background:#ffff00"></div>
<div style="left:2307.00px;top:526.53px;font-size:11.3px;line-height:11.3px;color:#ffffff;font-weight:bold;">Axis 1</div>
<div style="left:2388.30px;top:526.28px;font-size:11.6px;line-height:11.6px;color:#ffffff;font-weight:bold;">Units</div>
<svg width="2461" height="957" viewBox="0 0 2461 957" style="position:absolute;left:0;top:0"><path d="M2026.9 556.2L2034.2 556.2L2030.5500000000002 560.3Z" fill="#ffffff"/></svg>
<div style="left:2043.60px;top:553.44px;font-size:12px;line-height:12px;color:#e6e6e6;">Control Buttons</div>
<div style="left:2020.00px;top:571.00px;width:423.00px;height:1.00px;background:#2b2b2b;"></div>
<div style="left:2038.60px;top:579.44px;font-size:12px;line-height:12px;color:#e6e6e6;">Tune</div>
<div style="left:2272.90px;top:571.50px;width:1.00px;height:26.00px;background:#2b2b2b;"></div>
<div style="left:2360.90px;top:571.50px;width:1.00px;height:26.00px;background:#2b2b2b;"></div>
<div style="left:2442.20px;top:571.50px;width:1.00px;height:26.00px;background:#2b2b2b;"></div>
<div style="left:2279.20px;top:575.80px;width:77.80px;height:17.00px;background:#505050;border-radius:2px;"></div>
<div style="left:2018.00px;width:600px;text-align:center;top:579.61px;font-size:11.8px;line-height:11.8px;color:#e6e6e6;">Enable</div>
<div style="left:2020.00px;top:597.00px;width:423.00px;height:1.00px;background:#2b2b2b;"></div>
<div style="left:2038.60px;top:605.44px;font-size:12px;line-height:12px;color:#e6e6e6;">Fault Reset</div>
<div style="left:2272.90px;top:597.50px;width:1.00px;height:26.00px;background:#2b2b2b;"></div>
<div style="left:2360.90px;top:597.50px;width:1.00px;height:26.00px;background:#2b2b2b;"></div>
<div style="left:2442.20px;top:597.50px;width:1.00px;height:26.00px;background:#2b2b2b;"></div>
<div style="left:2279.20px;top:601.80px;width:77.80px;height:17.00px;background:#505050;border-radius:2px;"></div>
<div style="left:2018.00px;width:600px;text-align:center;top:605.61px;font-size:11.8px;line-height:11.8px;color:#e6e6e6;">Enable</div>
<div style="left:2020.00px;top:623.00px;width:423.00px;height:1.00px;background:#2b2b2b;"></div>
<svg width="2461" height="957" viewBox="0 0 2461 957" style="position:absolute;left:0;top:0"><path d="M2026.9 634.2L2034.2 634.2L2030.5500000000002 638.3Z" fill="#ffffff"/></svg>
<div style="left:2043.60px;top:631.44px;font-size:12px;line-height:12px;color:#e6e6e6;">Targets</div>
<div style="left:2020.00px;top:649.00px;width:423.00px;height:1.00px;background:#2b2b2b;"></div>
<div style="left:2038.60px;top:657.44px;font-size:12px;line-height:12px;color:#e6e6e6;">Operation mode</div>
<div style="left:2272.90px;top:649.50px;width:1.00px;height:26.00px;background:#2b2b2b;"></div>
<div style="left:2360.90px;top:649.50px;width:1.00px;height:26.00px;background:#2b2b2b;"></div>
<div style="left:2442.20px;top:649.50px;width:1.00px;height:26.00px;background:#2b2b2b;"></div>
<div style="left:2280.50px;top:657.44px;font-size:12px;line-height:12px;color:#e6e6e6;">Profile velocity</div>
<div style="left:2365.80px;top:657.44px;font-size:12px;line-height:12px;color:#e6e6e6;">-</div>
<div style="left:2020.00px;top:675.00px;width:423.00px;height:1.00px;background:#2b2b2b;"></div>
<svg width="2461" height="957" viewBox="0 0 2461 957" style="position:absolute;left:0;top:0"><path d="M2026.9 686.2L2034.2 686.2L2030.5500000000002 690.3Z" fill="#ffffff"/></svg>
<div style="left:2043.60px;top:683.44px;font-size:12px;line-height:12px;color:#e6e6e6;">Control loop</div>
<div style="left:2020.00px;top:701.00px;width:423.00px;height:1.00px;background:#2b2b2b;"></div>
<div style="left:2038.60px;top:709.44px;font-size:12px;line-height:12px;color:#e6e6e6;">Velocity loop Kp</div>
<div style="left:2272.90px;top:701.50px;width:1.00px;height:26.00px;background:#2b2b2b;"></div>
<div style="left:2360.90px;top:701.50px;width:1.00px;height:26.00px;background:#2b2b2b;"></div>
<div style="left:2442.20px;top:701.50px;width:1.00px;height:26.00px;background:#2b2b2b;"></div>
<div style="left:1758.10px;width:600px;text-align:right;top:709.87px;font-size:11.5px;line-height:11.5px;color:#e6e6e6;">0.053085</div>
<div style="left:2365.40px;top:709.44px;font-size:12px;line-height:12px;color:#e6e6e6;">Nm/(rev/s)</div>
<div style="left:2020.00px;top:727.00px;width:423.00px;height:1.00px;background:#2b2b2b;"></div>
<div style="left:2038.60px;top:735.44px;font-size:12px;line-height:12px;color:#e6e6e6;">Velocity loop Ki</div>
<div style="left:2272.90px;top:727.50px;width:1.00px;height:26.00px;background:#2b2b2b;"></div>
<div style="left:2360.90px;top:727.50px;width:1.00px;height:26.00px;background:#2b2b2b;"></div>
<div style="left:2442.20px;top:727.50px;width:1.00px;height:26.00px;background:#2b2b2b;"></div>
<div style="left:1758.10px;width:600px;text-align:right;top:735.87px;font-size:11.5px;line-height:11.5px;color:#e6e6e6;">9.16159</div>
<div style="left:2365.40px;top:735.44px;font-size:12px;line-height:12px;color:#e6e6e6;">Hz</div>
<div style="left:2020.00px;top:753.00px;width:423.00px;height:1.00px;background:#2b2b2b;"></div>
<div style="left:2038.60px;top:761.44px;font-size:12px;line-height:12px;color:#e6e6e6;">Velocity loop Kd</div>
<div style="left:2272.90px;top:753.50px;width:1.00px;height:26.00px;background:#2b2b2b;"></div>
<div style="left:2360.90px;top:753.50px;width:1.00px;height:26.00px;background:#2b2b2b;"></div>
<div style="left:2442.20px;top:753.50px;width:1.00px;height:26.00px;background:#2b2b2b;"></div>
<div style="left:1758.10px;width:600px;text-align:right;top:761.87px;font-size:11.5px;line-height:11.5px;color:#e6e6e6;">0.0</div>
<div style="left:2365.40px;top:761.44px;font-size:12px;line-height:12px;color:#e6e6e6;">s</div>
<div style="left:2020.00px;top:779.00px;width:423.00px;height:1.00px;background:#2b2b2b;"></div>
<div style="left:2038.60px;top:787.44px;font-size:12px;line-height:12px;color:#e6e6e6;">Velocity loop Kd filter</div>
<div style="left:2272.90px;top:779.50px;width:1.00px;height:26.00px;background:#2b2b2b;"></div>
<div style="left:2360.90px;top:779.50px;width:1.00px;height:26.00px;background:#2b2b2b;"></div>
<div style="left:2442.20px;top:779.50px;width:1.00px;height:26.00px;background:#2b2b2b;"></div>
<div style="left:1758.10px;width:600px;text-align:right;top:787.87px;font-size:11.5px;line-height:11.5px;color:#e6e6e6;">0.0</div>
<div style="left:2365.40px;top:787.44px;font-size:12px;line-height:12px;color:#e6e6e6;">rad/s</div>
<div style="left:2020.00px;top:805.00px;width:423.00px;height:1.00px;background:#2b2b2b;"></div>
<div style="left:2038.60px;top:813.44px;font-size:12px;line-height:12px;color:#e6e6e6;">Velocity loop Kffa</div>
<div style="left:2272.90px;top:805.50px;width:1.00px;height:26.00px;background:#2b2b2b;"></div>
<div style="left:2360.90px;top:805.50px;width:1.00px;height:26.00px;background:#2b2b2b;"></div>
<div style="left:2442.20px;top:805.50px;width:1.00px;height:26.00px;background:#2b2b2b;"></div>
<div style="left:1758.10px;width:600px;text-align:right;top:813.87px;font-size:11.5px;line-height:11.5px;color:#e6e6e6;">0.0</div>
<div style="left:2365.40px;top:813.44px;font-size:12px;line-height:12px;color:#e6e6e6;">Nm / (rev/s2)</div>
<div style="left:2020.00px;top:831.00px;width:423.00px;height:1.00px;background:#2b2b2b;"></div>
<div style="left:2038.60px;top:839.44px;font-size:12px;line-height:12px;color:#e6e6e6;">Velocity loop max. output</div>
<div style="left:2272.90px;top:831.50px;width:1.00px;height:26.00px;background:#2b2b2b;"></div>
<div style="left:2360.90px;top:831.50px;width:1.00px;height:26.00px;background:#2b2b2b;"></div>
<div style="left:2442.20px;top:831.50px;width:1.00px;height:26.00px;background:#2b2b2b;"></div>
<div style="left:1758.10px;width:600px;text-align:right;top:839.87px;font-size:11.5px;line-height:11.5px;color:#e6e6e6;">60.0</div>
<div style="left:2365.40px;top:839.44px;font-size:12px;line-height:12px;color:#e6e6e6;">Nm</div>
<div style="left:2020.00px;top:857.00px;width:423.00px;height:1.00px;background:#2b2b2b;"></div>
<div style="left:2038.60px;top:865.44px;font-size:12px;line-height:12px;color:#e6e6e6;">Velocity loop min. output</div>
<div style="left:2272.90px;top:857.50px;width:1.00px;height:26.00px;background:#2b2b2b;"></div>
<div style="left:2360.90px;top:857.50px;width:1.00px;height:26.00px;background:#2b2b2b;"></div>
<div style="left:2442.20px;top:857.50px;width:1.00px;height:26.00px;background:#2b2b2b;"></div>
<div style="left:1758.10px;width:600px;text-align:right;top:865.87px;font-size:11.5px;line-height:11.5px;color:#e6e6e6;">-60.0</div>
<div style="left:2365.40px;top:865.44px;font-size:12px;line-height:12px;color:#e6e6e6;">Nm</div>
<div style="left:2020.00px;top:883.00px;width:423.00px;height:1.00px;background:#2b2b2b;"></div>
<svg width="2461" height="957" viewBox="0 0 2461 957" style="position:absolute;left:0;top:0"><path d="M2028 892.8L2032.3 896.8L2028 900.8Z" fill="#ffffff"/></svg>
<div style="left:2043.60px;top:891.44px;font-size:12px;line-height:12px;color:#e6e6e6;">Filters</div>
<div style="left:2020.00px;top:909.00px;width:423.00px;height:1.00px;background:#2b2b2b;"></div>
<div style="left:2043.00px;top:922.61px;font-size:11.8px;line-height:11.8px;color:#e6e6e6;">Add Parameter</div>
<svg width="2461" height="957" viewBox="0 0 2461 957" style="position:absolute;left:0;top:0"><path d="M2445.7 520.5999999999999L2454.7 520.5999999999999L2450.2 513.3Z" fill="#8a8a8a"/></svg>
<div style="left:2446.20px;top:521.80px;width:9.00px;height:415.20px;background:#2c2c2c;border-radius:4.5px;"></div>
<div style="left:2446.20px;top:549.00px;width:9.00px;height:386.00px;background:#626262;border-radius:4.5px;"></div>
<svg width="2461" height="957" viewBox="0 0 2461 957" style="position:absolute;left:0;top:0"><path d="M2445.7 939.5L2454.7 939.5L2450.2 946.8Z" fill="#8a8a8a"/></svg>
<div style="left:2458px;top:25px;width:2px;height:930px;background:#f2f2f2"></div>
<svg width="2461" height="957" viewBox="0 0 2461 957" style="position:absolute;left:0;top:0"><path d="M64.40 62.50L64.40 458.50" stroke="#b8b8b8" stroke-width="1" fill="none"/><path d="M151.43 62.50L151.43 458.50" stroke="#4c4c4c" stroke-width="1" fill="none"/><path d="M238.46 62.50L238.46 458.50" stroke="#4c4c4c" stroke-width="1" fill="none"/><path d="M325.49 62.50L325.49 458.50" stroke="#4c4c4c" stroke-width="1" fill="none"/><path d="M412.52 62.50L412.52 458.50" stroke="#4c4c4c" stroke-width="1" fill="none"/><path d="M499.55 62.50L499.55 458.50" stroke="#4c4c4c" stroke-width="1" fill="none"/><path d="M586.58 62.50L586.58 458.50" stroke="#4c4c4c" stroke-width="1" fill="none"/><path d="M46.50 120.60L654.00 120.60" stroke="#b8b8b8" stroke-width="1" fill="none"/><path d="M46.50 190.77L654.00 190.77" stroke="#5e5e5e" stroke-width="1" fill="none"/><path d="M46.50 260.94L654.00 260.94" stroke="#b8b8b8" stroke-width="1" fill="none"/><path d="M46.50 331.11L654.00 331.11" stroke="#5e5e5e" stroke-width="1" fill="none"/><path d="M46.50 401.28L654.00 401.28" stroke="#b8b8b8" stroke-width="1" fill="none"/><path d="M46.50 62.50L46.50 459.00" stroke="#b8b8b8" stroke-width="1" fill="none"/><path d="M46.50 458.50L654.00 458.50" stroke="#b8b8b8" stroke-width="1" fill="none"/><path d="M384.00 62.50L384.00 458.50" stroke="#6e6a3c" stroke-width="2" fill="none"/></svg>
<div style="left:-559.00px;width:600px;text-align:right;top:115.34px;font-size:12px;line-height:12px;color:#cfcfcf;">2</div>
<div style="left:-559.00px;width:600px;text-align:right;top:185.51px;font-size:12px;line-height:12px;color:#cfcfcf;">1</div>
<div style="left:-559.00px;width:600px;text-align:right;top:255.68px;font-size:12px;line-height:12px;color:#cfcfcf;">0</div>
<div style="left:-559.00px;width:600px;text-align:right;top:325.85px;font-size:12px;line-height:12px;color:#cfcfcf;">-1</div>
<div style="left:-559.00px;width:600px;text-align:right;top:396.02px;font-size:12px;line-height:12px;color:#cfcfcf;">-2</div>
<div style="left:-235.60px;width:600px;text-align:center;top:460.84px;font-size:12px;line-height:12px;color:#cfcfcf;">0</div>
<div style="left:-148.57px;width:600px;text-align:center;top:460.84px;font-size:12px;line-height:12px;color:#cfcfcf;">2</div>
<div style="left:-61.54px;width:600px;text-align:center;top:460.84px;font-size:12px;line-height:12px;color:#cfcfcf;">4</div>
<div style="left:25.49px;width:600px;text-align:center;top:460.84px;font-size:12px;line-height:12px;color:#cfcfcf;">6</div>
<div style="left:112.52px;width:600px;text-align:center;top:460.84px;font-size:12px;line-height:12px;color:#cfcfcf;">8</div>
<div style="left:199.55px;width:600px;text-align:center;top:460.84px;font-size:12px;line-height:12px;color:#cfcfcf;">10</div>
<div style="left:286.58px;width:600px;text-align:center;top:460.84px;font-size:12px;line-height:12px;color:#cfcfcf;">12</div>
<div style="left:49.70px;width:600px;text-align:center;top:484.64px;font-size:12px;line-height:12px;color:#cfcfcf;">(s)</div>
<svg width="2461" height="957" viewBox="0 0 2461 957" style="position:absolute;left:0;top:0"><path d="M64.40 504.70L64.40 900.00" stroke="#b8b8b8" stroke-width="1" fill="none"/><path d="M151.43 504.70L151.43 900.00" stroke="#4c4c4c" stroke-width="1" fill="none"/><path d="M238.46 504.70L238.46 900.00" stroke="#4c4c4c" stroke-width="1" fill="none"/><path d="M325.49 504.70L325.49 900.00" stroke="#4c4c4c" stroke-width="1" fill="none"/><path d="M412.52 504.70L412.52 900.00" stroke="#4c4c4c" stroke-width="1" fill="none"/><path d="M499.55 504.70L499.55 900.00" stroke="#4c4c4c" stroke-width="1" fill="none"/><path d="M586.58 504.70L586.58 900.00" stroke="#4c4c4c" stroke-width="1" fill="none"/><path d="M46.50 507.40L654.00 507.40" stroke="#b8b8b8" stroke-width="1" fill="none"/><path d="M46.50 605.50L654.00 605.50" stroke="#5e5e5e" stroke-width="1" fill="none"/><path d="M46.50 703.60L654.00 703.60" stroke="#b8b8b8" stroke-width="1" fill="none"/><path d="M46.50 801.70L654.00 801.70" stroke="#5e5e5e" stroke-width="1" fill="none"/><path d="M46.50 899.80L654.00 899.80" stroke="#b8b8b8" stroke-width="1" fill="none"/><path d="M46.50 504.70L46.50 901.00" stroke="#b8b8b8" stroke-width="1" fill="none"/><path d="M46.50 900.00L654.00 900.00" stroke="#b8b8b8" stroke-width="2" fill="none"/></svg>
<div style="left:-559.00px;width:600px;text-align:right;top:502.14px;font-size:12px;line-height:12px;color:#cfcfcf;">0.2</div>
<div style="left:-559.00px;width:600px;text-align:right;top:600.24px;font-size:12px;line-height:12px;color:#cfcfcf;">0.1</div>
<div style="left:-559.00px;width:600px;text-align:right;top:698.34px;font-size:12px;line-height:12px;color:#cfcfcf;">0</div>
<div style="left:-559.00px;width:600px;text-align:right;top:796.44px;font-size:12px;line-height:12px;color:#cfcfcf;">-0.1</div>
<div style="left:-559.00px;width:600px;text-align:right;top:894.54px;font-size:12px;line-height:12px;color:#cfcfcf;">-0.2</div>
<div style="left:-235.60px;width:600px;text-align:center;top:902.84px;font-size:12px;line-height:12px;color:#cfcfcf;">0</div>
<div style="left:-148.57px;width:600px;text-align:center;top:902.84px;font-size:12px;line-height:12px;color:#cfcfcf;">2</div>
<div style="left:-61.54px;width:600px;text-align:center;top:902.84px;font-size:12px;line-height:12px;color:#cfcfcf;">4</div>
<div style="left:25.49px;width:600px;text-align:center;top:902.84px;font-size:12px;line-height:12px;color:#cfcfcf;">6</div>
<div style="left:112.52px;width:600px;text-align:center;top:902.84px;font-size:12px;line-height:12px;color:#cfcfcf;">8</div>
<div style="left:199.55px;width:600px;text-align:center;top:902.84px;font-size:12px;line-height:12px;color:#cfcfcf;">10</div>
<div style="left:286.58px;width:600px;text-align:center;top:902.84px;font-size:12px;line-height:12px;color:#cfcfcf;">12</div>
<div style="left:49.70px;width:600px;text-align:center;top:926.84px;font-size:12px;line-height:12px;color:#cfcfcf;">(s)</div>
<svg width="2461" height="957" viewBox="0 0 2461 957" style="position:absolute;left:0;top:0"><path d="M58.50 459.50V413.30H241.70V459.50" fill="#000" stroke="#9a9a9a" stroke-width="1.2"/></svg>
<div style="left:62.00px;top:416.18px;font-size:11.6px;line-height:11.6px;color:#ffffff;">x = 7.3558</div>
<div style="left:62.00px;top:431.18px;font-size:11.6px;line-height:11.6px;color:#ff0000;">Velocity demand(Axis 1) = 0.0000</div>
<div style="left:62.00px;top:446.18px;font-size:11.6px;line-height:11.6px;color:#00ffff;">Actual velocity(Axis 1) = 0.0000</div>
<svg width="2461" height="957" viewBox="0 0 2461 957" style="position:absolute;left:0;top:0"><rect x="301.40" y="518.00" width="342.30" height="33.40" fill="#000" stroke="#9a9a9a" stroke-width="1.2"/></svg>
<div style="left:305.40px;top:521.08px;font-size:11.6px;line-height:11.6px;color:#ffffff;">x = 12.8956</div>
<div style="left:305.40px;top:535.30px;font-size:12.05px;line-height:12.05px;color:#7fff00;">Current quadrature / A control loop command(Axis 1) =-0.1015</div>
<svg width="2461" height="957" viewBox="0 0 2461 957" style="position:absolute;left:0;top:0"><path d="M1415.40 64.00L1415.40 459.00" stroke="#b8b8b8" stroke-width="1" fill="none"/><path d="M1472.24 64.00L1472.24 459.00" stroke="#5e5e5e" stroke-width="1" fill="none"/><path d="M1529.08 64.00L1529.08 459.00" stroke="#5e5e5e" stroke-width="1" fill="none"/><path d="M1585.92 64.00L1585.92 459.00" stroke="#5e5e5e" stroke-width="1" fill="none"/><path d="M1642.76 64.00L1642.76 459.00" stroke="#5e5e5e" stroke-width="1" fill="none"/><path d="M1699.60 64.00L1699.60 459.00" stroke="#5e5e5e" stroke-width="1" fill="none"/><path d="M1756.44 64.00L1756.44 459.00" stroke="#5e5e5e" stroke-width="1" fill="none"/><path d="M1813.28 64.00L1813.28 459.00" stroke="#5e5e5e" stroke-width="1" fill="none"/><path d="M1870.12 64.00L1870.12 459.00" stroke="#5e5e5e" stroke-width="1" fill="none"/><path d="M1926.96 64.00L1926.96 459.00" stroke="#5e5e5e" stroke-width="1" fill="none"/><path d="M1983.80 64.00L1983.80 459.00" stroke="#b8b8b8" stroke-width="1" fill="none"/><path d="M1399.80 121.30L2007.00 121.30" stroke="#b8b8b8" stroke-width="1" fill="none"/><path d="M1399.80 191.47L2007.00 191.47" stroke="#6a6a6a" stroke-width="1" fill="none"/><path d="M1399.80 261.64L2007.00 261.64" stroke="#b8b8b8" stroke-width="1" fill="none"/><path d="M1399.80 331.81L2007.00 331.81" stroke="#6a6a6a" stroke-width="1" fill="none"/><path d="M1399.80 401.98L2007.00 401.98" stroke="#b8b8b8" stroke-width="1" fill="none"/><path d="M1399.80 64.00L1399.80 459.50" stroke="#b8b8b8" stroke-width="1" fill="none"/><path d="M1399.80 459.00L2007.00 459.00" stroke="#b8b8b8" stroke-width="1" fill="none"/></svg>
<div style="left:794.50px;width:600px;text-align:right;top:116.74px;font-size:12px;line-height:12px;color:#cfcfcf;">2</div>
<div style="left:794.50px;width:600px;text-align:right;top:186.91px;font-size:12px;line-height:12px;color:#cfcfcf;">1</div>
<div style="left:794.50px;width:600px;text-align:right;top:257.08px;font-size:12px;line-height:12px;color:#cfcfcf;">0</div>
<div style="left:794.50px;width:600px;text-align:right;top:327.25px;font-size:12px;line-height:12px;color:#cfcfcf;">-1</div>
<div style="left:794.50px;width:600px;text-align:right;top:397.42px;font-size:12px;line-height:12px;color:#cfcfcf;">-2</div>
<div style="left:1115.40px;width:600px;text-align:center;top:461.84px;font-size:12px;line-height:12px;color:#cfcfcf;">0</div>
<div style="left:1172.24px;width:600px;text-align:center;top:461.84px;font-size:12px;line-height:12px;color:#cfcfcf;">1</div>
<div style="left:1229.08px;width:600px;text-align:center;top:461.84px;font-size:12px;line-height:12px;color:#cfcfcf;">2</div>
<div style="left:1285.92px;width:600px;text-align:center;top:461.84px;font-size:12px;line-height:12px;color:#cfcfcf;">3</div>
<div style="left:1342.76px;width:600px;text-align:center;top:461.84px;font-size:12px;line-height:12px;color:#cfcfcf;">4</div>
<div style="left:1399.60px;width:600px;text-align:center;top:461.84px;font-size:12px;line-height:12px;color:#cfcfcf;">5</div>
<div style="left:1456.44px;width:600px;text-align:center;top:461.84px;font-size:12px;line-height:12px;color:#cfcfcf;">6</div>
<div style="left:1513.28px;width:600px;text-align:center;top:461.84px;font-size:12px;line-height:12px;color:#cfcfcf;">7</div>
<div style="left:1570.12px;width:600px;text-align:center;top:461.84px;font-size:12px;line-height:12px;color:#cfcfcf;">8</div>
<div style="left:1626.96px;width:600px;text-align:center;top:461.84px;font-size:12px;line-height:12px;color:#cfcfcf;">9</div>
<div style="left:1683.80px;width:600px;text-align:center;top:461.84px;font-size:12px;line-height:12px;color:#cfcfcf;">10</div>
<div style="left:1402.80px;width:600px;text-align:center;top:485.64px;font-size:12px;line-height:12px;color:#cfcfcf;">(s)</div>
<svg width="2461" height="957" viewBox="0 0 2461 957" style="position:absolute;left:0;top:0"><path d="M1415.40 505.50L1415.40 901.20" stroke="#b8b8b8" stroke-width="1" fill="none"/><path d="M1472.24 505.50L1472.24 901.20" stroke="#5e5e5e" stroke-width="1" fill="none"/><path d="M1529.08 505.50L1529.08 901.20" stroke="#5e5e5e" stroke-width="1" fill="none"/><path d="M1585.92 505.50L1585.92 901.20" stroke="#5e5e5e" stroke-width="1" fill="none"/><path d="M1642.76 505.50L1642.76 901.20" stroke="#5e5e5e" stroke-width="1" fill="none"/><path d="M1699.60 505.50L1699.60 901.20" stroke="#5e5e5e" stroke-width="1" fill="none"/><path d="M1756.44 505.50L1756.44 901.20" stroke="#5e5e5e" stroke-width="1" fill="none"/><path d="M1813.28 505.50L1813.28 901.20" stroke="#5e5e5e" stroke-width="1" fill="none"/><path d="M1870.12 505.50L1870.12 901.20" stroke="#5e5e5e" stroke-width="1" fill="none"/><path d="M1926.96 505.50L1926.96 901.20" stroke="#5e5e5e" stroke-width="1" fill="none"/><path d="M1983.80 505.50L1983.80 901.20" stroke="#b8b8b8" stroke-width="1" fill="none"/><path d="M1399.80 508.40L2007.00 508.40" stroke="#b8b8b8" stroke-width="1" fill="none"/><path d="M1399.80 528.21L2007.00 528.21" stroke="#5a5a5a" stroke-width="1" fill="none"/><path d="M1399.80 548.02L2007.00 548.02" stroke="#5a5a5a" stroke-width="1" fill="none"/><path d="M1399.80 567.83L2007.00 567.83" stroke="#5a5a5a" stroke-width="1" fill="none"/><path d="M1399.80 587.64L2007.00 587.64" stroke="#5a5a5a" stroke-width="1" fill="none"/><path d="M1399.80 607.45L2007.00 607.45" stroke="#6a6a6a" stroke-width="1" fill="none"/><path d="M1399.80 627.26L2007.00 627.26" stroke="#5a5a5a" stroke-width="1" fill="none"/><path d="M1399.80 647.07L2007.00 647.07" stroke="#5a5a5a" stroke-width="1" fill="none"/><path d="M1399.80 666.88L2007.00 666.88" stroke="#5a5a5a" stroke-width="1" fill="none"/><path d="M1399.80 686.69L2007.00 686.69" stroke="#5a5a5a" stroke-width="1" fill="none"/><path d="M1399.80 706.50L2007.00 706.50" stroke="#b8b8b8" stroke-width="1" fill="none"/><path d="M1399.80 726.31L2007.00 726.31" stroke="#5a5a5a" stroke-width="1" fill="none"/><path d="M1399.80 746.12L2007.00 746.12" stroke="#5a5a5a" stroke-width="1" fill="none"/><path d="M1399.80 765.93L2007.00 765.93" stroke="#5a5a5a" stroke-width="1" fill="none"/><path d="M1399.80 785.74L2007.00 785.74" stroke="#5a5a5a" stroke-width="1" fill="none"/><path d="M1399.80 805.55L2007.00 805.55" stroke="#6a6a6a" stroke-width="1" fill="none"/><path d="M1399.80 825.36L2007.00 825.36" stroke="#5a5a5a" stroke-width="1" fill="none"/><path d="M1399.80 845.17L2007.00 845.17" stroke="#5a5a5a" stroke-width="1" fill="none"/><path d="M1399.80 864.98L2007.00 864.98" stroke="#5a5a5a" stroke-width="1" fill="none"/><path d="M1399.80 884.79L2007.00 884.79" stroke="#5a5a5a" stroke-width="1" fill="none"/><path d="M1399.80 505.50L1399.80 902.00" stroke="#b8b8b8" stroke-width="1" fill="none"/><path d="M1399.80 901.40L2007.00 901.40" stroke="#b8b8b8" stroke-width="1.4" fill="none"/></svg>
<div style="left:794.50px;width:600px;text-align:right;top:503.14px;font-size:12px;line-height:12px;color:#cfcfcf;">0.2</div>
<div style="left:794.50px;width:600px;text-align:right;top:602.29px;font-size:12px;line-height:12px;color:#cfcfcf;">0.1</div>
<div style="left:794.50px;width:600px;text-align:right;top:701.44px;font-size:12px;line-height:12px;color:#cfcfcf;">0</div>
<div style="left:794.50px;width:600px;text-align:right;top:800.59px;font-size:12px;line-height:12px;color:#cfcfcf;">-0.1</div>
<div style="left:1115.40px;width:600px;text-align:center;top:903.84px;font-size:12px;line-height:12px;color:#cfcfcf;">0</div>
<div style="left:1172.24px;width:600px;text-align:center;top:903.84px;font-size:12px;line-height:12px;color:#cfcfcf;">1</div>
<div style="left:1229.08px;width:600px;text-align:center;top:903.84px;font-size:12px;line-height:12px;color:#cfcfcf;">2</div>
<div style="left:1285.92px;width:600px;text-align:center;top:903.84px;font-size:12px;line-height:12px;color:#cfcfcf;">3</div>
<div style="left:1342.76px;width:600px;text-align:center;top:903.84px;font-size:12px;line-height:12px;color:#cfcfcf;">4</div>
<div style="left:1399.60px;width:600px;text-align:center;top:903.84px;font-size:12px;line-height:12px;color:#cfcfcf;">5</div>
<div style="left:1456.44px;width:600px;text-align:center;top:903.84px;font-size:12px;line-height:12px;color:#cfcfcf;">6</div>
<div style="left:1513.28px;width:600px;text-align:center;top:903.84px;font-size:12px;line-height:12px;color:#cfcfcf;">7</div>
<div style="left:1570.12px;width:600px;text-align:center;top:903.84px;font-size:12px;line-height:12px;color:#cfcfcf;">8</div>
<div style="left:1626.96px;width:600px;text-align:center;top:903.84px;font-size:12px;line-height:12px;color:#cfcfcf;">9</div>
<div style="left:1683.80px;width:600px;text-align:center;top:903.84px;font-size:12px;line-height:12px;color:#cfcfcf;">10</div>
<div style="left:1402.80px;width:600px;text-align:center;top:927.84px;font-size:12px;line-height:12px;color:#cfcfcf;">(s)</div>
<svg width="2461" height="957" viewBox="0 0 2461 957" style="position:absolute;left:0;top:0"><path d="M1422.0 261.4L1500.3 261.4L1507.6 216.0L1514.2 121.2L1529.2 121.2L1549.8 401.9L1585.5 401.9L1592.7 377.2L1600.0 193.0L1606.4 121.2L1642.5 121.2L1649.4 145.7L1656.8 333.4L1663.4 401.8L1698.4 401.8L1706.1 371.7L1713.1 202.0L1727.3 121.2L1756.6 121.2L1763.2 144.6L1777.0 401.8L1812.5 402.0L1819.5 376.8L1826.0 185.3L1833.7 121.2L1869.8 121.2L1876.1 144.6L1883.1 331.2L1897.8 402.1L1925.9 402.1L1933.0 379.5L1940.4 191.6L1947.1 121.2L1983.7 121.2" fill="none" stroke="#ff0000" stroke-width="1.25" stroke-linejoin="miter" stroke-miterlimit="3"/><path d="M1422.0 261.4L1507.1 261.4L1514.3 153.0L1521.8 117.3L1543.0 167.8L1550.2 369.7L1557.2 303.0L1568.4 414.0L1574.0 440.0L1580.0 440.0L1585.6 377.5L1592.6 368.4L1600.2 250.0L1606.7 148.2L1613.8 195.8L1621.0 82.6L1628.0 133.5L1635.0 86.1L1642.0 142.5L1649.4 147.8L1656.0 262.0L1663.4 289.5L1670.6 350.9L1677.6 367.4L1684.8 375.5L1691.9 364.1L1698.4 402.4L1706.1 429.4L1713.4 271.9L1727.5 195.8L1734.2 86.1L1741.3 93.4L1748.8 83.4L1755.9 135.6L1762.8 86.1L1784.0 365.2L1791.0 368.0L1798.2 426.0L1812.3 427.3L1819.5 411.3L1826.7 261.0L1833.9 249.7L1840.6 149.8L1847.9 89.2L1854.8 133.5L1862.1 86.1L1869.2 133.1L1876.1 86.1L1883.1 263.2L1904.6 408.0L1911.7 426.2L1925.5 426.2L1933.0 387.8L1939.8 302.7L1947.2 266.5L1954.0 158.2L1960.7 116.4L1968.4 96.6L1982.6 137.7" fill="none" stroke="#00ffff" stroke-width="1.25" stroke-linejoin="miter" stroke-miterlimit="3"/><path d="M1422.0 820.3L1500.3 820.3L1508.1 628.8L1514.8 574.0L1521.8 569.4L1528.6 580.0L1543.2 659.6L1550.0 840.5L1557.0 832.8L1564.2 839.0L1571.2 799.9L1578.3 824.0L1585.5 828.4L1592.5 768.0L1606.8 548.7L1614.0 553.7L1621.0 555.3L1627.8 588.8L1634.8 594.3L1642.1 574.6L1649.5 668.5L1656.3 668.5L1663.4 785.5L1670.4 851.3L1677.6 860.8L1684.6 800.9L1691.9 799.1L1698.9 814.1L1706.1 780.1L1713.1 668.9L1727.4 572.4L1734.6 601.3L1741.7 559.7L1748.5 581.6L1755.9 563.6L1776.3 826.1L1784.0 856.2L1791.0 837.1L1798.2 799.5L1812.5 826.8L1819.5 780.1L1833.8 559.2L1838.0 530.0L1843.0 530.0L1847.6 602.0L1855.0 590.4L1861.9 608.6L1868.9 610.4L1876.1 629.9L1883.1 759.2L1897.4 882.6L1911.7 798.7L1925.9 835.0L1933.0 794.4L1939.1 675.6L1946.8 618.5L1951.0 530.0L1957.0 530.0L1961.0 602.0L1968.1 605.3L1975.3 618.5L1983.0 572.4" fill="none" stroke="#7fff00" stroke-width="1.25" stroke-linejoin="miter" stroke-miterlimit="3"/><path d="M1411.50 460.00V414.50H1593.30V460.00" fill="#000" stroke="#9a9a9a" stroke-width="1.2"/></svg>
<div style="left:1415.00px;top:417.58px;font-size:11.6px;line-height:11.6px;color:#ffffff;">x = 0.0000</div>
<div style="left:1415.00px;top:432.68px;font-size:11.6px;line-height:11.6px;color:#ff0000;">Velocity demand(Axis 1) = 0.0000</div>
<div style="left:1415.00px;top:447.48px;font-size:11.6px;line-height:11.6px;color:#00ffff;">Actual velocity(Axis 1) = 0.0000</div>
<svg width="2461" height="957" viewBox="0 0 2461 957" style="position:absolute;left:0;top:0"><rect x="1656.30" y="519.30" width="340.30" height="32.90" fill="#000" stroke="#9a9a9a" stroke-width="1.2"/></svg>
<div style="left:1660.00px;top:522.08px;font-size:11.6px;line-height:11.6px;color:#ffffff;">x = 0.0000</div>
<div style="left:1660.00px;top:536.60px;font-size:12.05px;line-height:12.05px;color:#7fff00;">Current quadrature / A control loop command(Axis 1) = 0.0000</div>
<svg width="2461" height="957" viewBox="0 0 2461 957" style="position:absolute;left:0;top:0"><path d="M864.10 502.30L920.56 558.76L928.80 551.30L930.00 575.30L906.60 571.40L913.69 564.99L857.60 508.90Z" fill="#0a80ff" stroke="#000" stroke-width="1.2" stroke-linejoin="miter"/><path d="M2224.00 502.70L2279.82 558.52L2286.60 551.90L2290.50 574.50L2265.70 572.30L2273.44 564.74L2217.40 508.70Z" fill="#ff0000" stroke="#000" stroke-width="1.2" stroke-linejoin="miter"/><path d="M1141.2 534.9H1301.5V525L1318.9 539.4L1301.5 554.1V544H1141.2Z" fill="#ff0000"/></svg>
</div></body></html>
